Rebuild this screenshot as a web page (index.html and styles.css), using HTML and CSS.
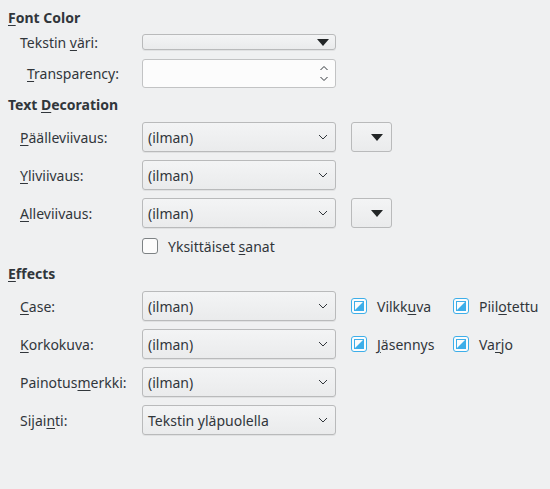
FILE: index.html
```html
<html>
  <head>
    <meta name="viewport" content="width=device-width, initial-scale=1">
    <link rel="stylesheet" href="styles.css">
  </head>
  <body>
    <div class="page">
      <h2 class="head head-first"><u>F</u>ont Color</h2>
      <div class="row row-color">
        <label class="label">Tekstin <u>v</u>äri:</label>
        <div class="combo color-combo">
          <svg class="tri" width="12" height="7" viewBox="0 0 12 7"><polygon points="0,0 12,0 6,7" fill="#232627"/></svg>
        </div>
      </div>
      <div class="row row-spin">
        <label class="label label-spin"><u>T</u>ransparency:</label>
        <div class="spin">
          <svg class="spin-arrows" width="10" height="19" viewBox="0 0 10 19">
            <polyline points="1.5,6 5,2.5 8.5,6" fill="none" stroke="#31363b" stroke-width="1"/>
            <polyline points="1.5,13 5,16.5 8.5,13" fill="none" stroke="#31363b" stroke-width="1"/>
          </svg>
        </div>
      </div>

      <h2 class="head">Text <u>D</u>ecoration</h2>
      <div class="row">
        <label class="label"><u>P</u>äälleviivaus:</label>
        <div class="combo"><span>(ilman)</span><svg class="chev" width="10" height="6" viewBox="0 0 10 6"><polyline points="1,1 5,5 9,1" fill="none" stroke="#31363b"/></svg></div>
        <div class="btn"><svg width="12" height="7" viewBox="0 0 12 7"><polygon points="0,0 12,0 6,7" fill="#232627"/></svg></div>
      </div>
      <div class="row">
        <label class="label"><u>Y</u>liviivaus:</label>
        <div class="combo"><span>(ilman)</span><svg class="chev" width="10" height="6" viewBox="0 0 10 6"><polyline points="1,1 5,5 9,1" fill="none" stroke="#31363b"/></svg></div>
      </div>
      <div class="row">
        <label class="label"><u>A</u>lleviivaus:</label>
        <div class="combo"><span>(ilman)</span><svg class="chev" width="10" height="6" viewBox="0 0 10 6"><polyline points="1,1 5,5 9,1" fill="none" stroke="#31363b"/></svg></div>
        <div class="btn"><svg width="12" height="7" viewBox="0 0 12 7"><polygon points="0,0 12,0 6,7" fill="#232627"/></svg></div>
      </div>
      <div class="row row-check">
        <span class="label"></span>
        <div class="check">
          <span class="box"></span>
          <span>Yksittäiset <u>s</u>anat</span>
        </div>
      </div>

      <h2 class="head head-effects"><u>E</u>ffects</h2>
      <div class="row">
        <label class="label"><u>C</u>ase:</label>
        <div class="combo"><span>(ilman)</span><svg class="chev" width="10" height="6" viewBox="0 0 10 6"><polyline points="1,1 5,5 9,1" fill="none" stroke="#31363b"/></svg></div>
        <div class="check check-a">
          <svg class="tick" width="16" height="16" viewBox="0 0 16 16"><rect x="0.5" y="0.5" width="15" height="15" rx="2.5" fill="#fcfcfc" stroke="#3daee9"/><rect x="3.5" y="3.5" width="9" height="9" fill="#fcfcfc" stroke="#3daee9"/><polygon points="4,12 12,4 12,12" fill="#3daee9"/></svg>
          <span>Vilkk<u>u</u>va</span>
        </div>
        <div class="check">
          <svg class="tick" width="16" height="16" viewBox="0 0 16 16"><rect x="0.5" y="0.5" width="15" height="15" rx="2.5" fill="#fcfcfc" stroke="#3daee9"/><rect x="3.5" y="3.5" width="9" height="9" fill="#fcfcfc" stroke="#3daee9"/><polygon points="4,12 12,4 12,12" fill="#3daee9"/></svg>
          <span>Piil<u>o</u>tettu</span>
        </div>
      </div>
      <div class="row">
        <label class="label"><u>K</u>orkokuva:</label>
        <div class="combo"><span>(ilman)</span><svg class="chev" width="10" height="6" viewBox="0 0 10 6"><polyline points="1,1 5,5 9,1" fill="none" stroke="#31363b"/></svg></div>
        <div class="check check-a">
          <svg class="tick" width="16" height="16" viewBox="0 0 16 16"><rect x="0.5" y="0.5" width="15" height="15" rx="2.5" fill="#fcfcfc" stroke="#3daee9"/><rect x="3.5" y="3.5" width="9" height="9" fill="#fcfcfc" stroke="#3daee9"/><polygon points="4,12 12,4 12,12" fill="#3daee9"/></svg>
          <span><u>J</u>äsennys</span>
        </div>
        <div class="check">
          <svg class="tick" width="16" height="16" viewBox="0 0 16 16"><rect x="0.5" y="0.5" width="15" height="15" rx="2.5" fill="#fcfcfc" stroke="#3daee9"/><rect x="3.5" y="3.5" width="9" height="9" fill="#fcfcfc" stroke="#3daee9"/><polygon points="4,12 12,4 12,12" fill="#3daee9"/></svg>
          <span>Va<u>r</u>jo</span>
        </div>
      </div>
      <div class="row">
        <label class="label">Painotus<u>m</u>erkki:</label>
        <div class="combo"><span>(ilman)</span><svg class="chev" width="10" height="6" viewBox="0 0 10 6"><polyline points="1,1 5,5 9,1" fill="none" stroke="#31363b"/></svg></div>
      </div>
      <div class="row">
        <label class="label">Sijai<u>n</u>ti:</label>
        <div class="combo"><span>Tekstin yläpuolella</span><svg class="chev" width="10" height="6" viewBox="0 0 10 6"><polyline points="1,1 5,5 9,1" fill="none" stroke="#31363b"/></svg></div>
      </div>
    </div>
  </body>
</html>
```

FILE: styles.css
```css
body {
  margin: 0;
  background: #eff0f1;
  color: #31363b;
  font-family: "Noto Sans", sans-serif;
  font-size: 14px;
}

u {
  text-decoration: underline;
  text-underline-offset: 2px;
}

.page {
  display: flex;
  flex-direction: column;
  padding: 9px 0 0 8px;
}

.head {
  margin: 7px 0 0 0;
  padding-top: 1px;
  font-size: 14px;
  font-weight: bold;
  line-height: 18px;
}

.head-first {
  margin-top: 0;
  padding-top: 0;
}

.head-effects {
  margin-top: 9px;
  padding-top: 2px;
}

.row {
  display: flex;
  align-items: center;
  height: 30px;
  margin-top: 8px;
  padding-left: 12px;
}

.row-color {
  height: 16px;
  margin-top: 7px;
}

.row-spin {
  height: 29px;
  margin-top: 9px;
}

.row-check {
  height: 16px;
  margin-top: 10px;
}

.label {
  width: 122px;
  flex: none;
}

.label-spin {
  padding-left: 7px;
  width: 115px;
}

.combo {
  box-sizing: border-box;
  width: 194px;
  height: 100%;
  display: flex;
  align-items: center;
  justify-content: space-between;
  padding: 0 7px 0 5px;
  border: 1px solid #b9babb;
  border-radius: 3px;
  background: linear-gradient(#f3f4f5, #eaebec);
  box-shadow: 0 1px 0 rgba(0, 0, 0, 0.06);
}

.color-combo {
  justify-content: flex-end;
  padding-right: 6px;
}

.spin {
  box-sizing: border-box;
  width: 194px;
  height: 100%;
  display: flex;
  align-items: center;
  justify-content: flex-end;
  padding-right: 6px;
  border: 1px solid #c2c3c4;
  border-radius: 3px;
  background: #fcfcfc;
}

.btn {
  box-sizing: border-box;
  width: 41px;
  height: 100%;
  margin-left: 15px;
  display: flex;
  align-items: center;
  justify-content: flex-end;
  padding-right: 8px;
  border: 1px solid #b9babb;
  border-radius: 3px;
  background: linear-gradient(#f3f4f5, #eaebec);
}

.check {
  display: flex;
  align-items: center;
  gap: 10px;
}

.check-a {
  margin-left: 15px;
  width: 102px;
}

.tick {
  flex: none;
}

.box {
  box-sizing: border-box;
  width: 16px;
  height: 16px;
  border: 1px solid #7d8284;
  border-radius: 3px;
  background: #fcfcfc;
}
```
